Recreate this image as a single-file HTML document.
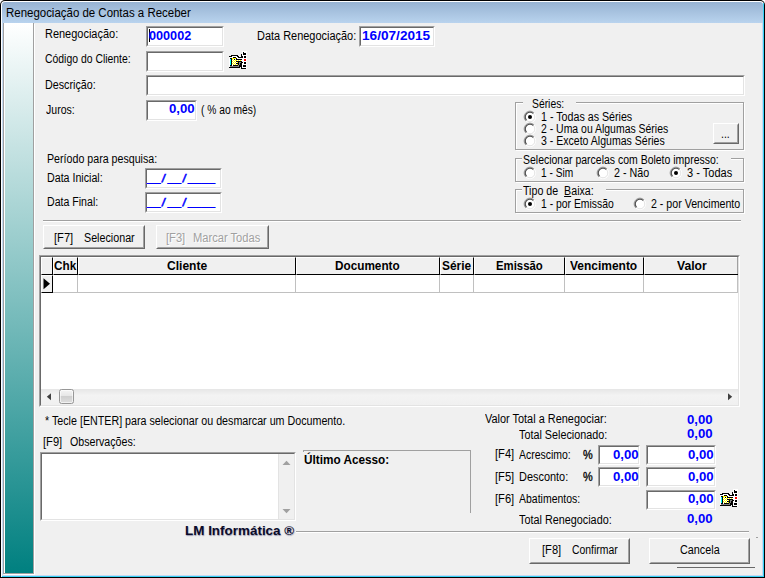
<!DOCTYPE html>
<html lang="pt-BR"><head><meta charset="utf-8"><title>Renegociação de Contas a Receber</title>
<style>
html,body{margin:0;padding:0}
body{width:765px;height:578px;position:relative;overflow:hidden;background:#f0f0f0;font-family:"Liberation Sans",sans-serif}
.a{position:absolute;box-sizing:border-box}
.t{position:absolute;white-space:pre;line-height:16px;transform-origin:0 0;font-family:"Liberation Sans",sans-serif}
/* window frame */
#frame{left:0;top:0;width:765px;height:578px;background:#000;border-radius:5px 5px 0 0}
#frame2{left:1px;top:1px;width:763px;height:576px;background:#fff;border-radius:4px 4px 0 0}
#title{left:2px;top:2px;width:761px;height:21px;background:linear-gradient(#97b3d2,#b9d3ee);border-radius:3px 3px 0 0}
#client{left:3px;top:23px;width:759px;height:552px;background:#f0f0f0}
#side{left:3px;top:23px;width:31px;height:551px;background:linear-gradient(#ffffff,#008080);border:1px solid #a0a0a0;border-top:none;box-shadow:inset 1px 0 0 #fff,1px 1px 0 #fff}
/* sunken edit */
.ed{background:#fff;border:1px solid;border-color:#a0a0a0 #fff #fff #a0a0a0}
.ed:before{content:"";position:absolute;left:0;top:0;right:0;bottom:0;border:1px solid;border-color:#696969 #e3e3e3 #e3e3e3 #696969}
/* raised button */
.bt{background:#f0f0f0;border:1px solid;border-color:#fff #696969 #696969 #fff}
.bt:before{content:"";position:absolute;left:0;top:0;right:0;bottom:0;border:1px solid;border-color:#f0f0f0 #a0a0a0 #a0a0a0 #f0f0f0}
/* etched group */
.gb{border:1px solid #a0a0a0;box-shadow:1px 1px 0 #fff, inset 1px 1px 0 #fff}
.gl{background:#f0f0f0}
.hl{height:2px;border-top:1px solid #a0a0a0;border-bottom:1px solid #fff}
svg{position:absolute;overflow:visible}
body{background:#fff}
#fr3{left:2px;top:23px;width:762px;height:554px;background:#c4daf3;border-right:1px solid #35d0f5;border-bottom:1px solid #35d0f5}
#cy{left:763px;top:3px;width:1px;height:574px;background:#35d0f5}
.sl{display:inline-block;font-size:.85em;width:.654em;text-align:center;font-style:normal;transform:skewX(-14deg)}

.pc{font-size:11px;color:#000;}
.r{font-size:12.5px;color:#000;}
.g{font-size:12.5px;color:#a0a0a0;text-shadow:1px 1px 0 #fff;}
.b{font-size:13px;color:#0000ff;font-weight:bold;}
.bk{font-size:12.5px;color:#000;font-weight:bold;}
.ti{font-size:12px;color:#000;}
.lm{font-size:13.33px;color:#0b0b2a;font-weight:bold;}
</style></head>
<body>
<div class="a" id="frame"></div>
<div class="a" id="frame2"></div>
<div class="a" id="fr3"></div>
<div class="a" id="title"></div><div class="a" id="cy"></div>
<div class="a" id="client"></div>
<div class="a" id="side"></div>
<div class="a ed" style="left:146px;top:26px;width:78px;height:21px;"></div>
<div class="a " style="left:149px;top:29px;width:1px;height:13px;background:#000"></div>
<div class="a ed" style="left:359px;top:26px;width:76px;height:21px;"></div>
<div class="a ed" style="left:146px;top:51px;width:78px;height:21px;"></div>
<div class="a ed" style="left:146px;top:75px;width:599px;height:21px;"></div>
<div class="a ed" style="left:146px;top:100px;width:51px;height:21px;"></div>
<div class="a ed" style="left:145px;top:168px;width:77px;height:21px;"></div>
<div class="a ed" style="left:145px;top:192px;width:77px;height:21px;"></div>
<div class="a gb" style="left:515px;top:102px;width:229px;height:48px;"></div>
<div class="a gl" style="left:523px;top:102px;width:53px;height:2px;"></div>
<div class="a gb" style="left:515px;top:158px;width:229px;height:24px;"></div>
<div class="a gl" style="left:522px;top:158px;width:209px;height:2px;"></div>
<div class="a gb" style="left:515px;top:189px;width:229px;height:24px;"></div>
<div class="a gl" style="left:522px;top:189px;width:84px;height:2px;"></div>
<svg style="left:523.5px;top:110.5px" width="12" height="12" viewBox="0 0 12 12"><circle cx="6" cy="6" r="5.5" fill="#fff"/><path d="M10.1 1.9A5.8 5.8 0 1 0 1.9 10.1" fill="none" stroke="#a0a0a0" stroke-width="1"/><path d="M1.9 10.1A5.8 5.8 0 0 0 10.1 1.9" fill="none" stroke="#fff" stroke-width="1"/><path d="M9.4 2.6A4.8 4.8 0 1 0 2.6 9.4" fill="none" stroke="#505050" stroke-width="1.3"/><path d="M2.6 9.4A4.8 4.8 0 0 0 9.4 2.6" fill="none" stroke="#e3e3e3" stroke-width="1"/><circle cx="6" cy="6" r="2" fill="#000"/></svg>
<svg style="left:523.5px;top:123px" width="12" height="12" viewBox="0 0 12 12"><circle cx="6" cy="6" r="5.5" fill="#fff"/><path d="M10.1 1.9A5.8 5.8 0 1 0 1.9 10.1" fill="none" stroke="#a0a0a0" stroke-width="1"/><path d="M1.9 10.1A5.8 5.8 0 0 0 10.1 1.9" fill="none" stroke="#fff" stroke-width="1"/><path d="M9.4 2.6A4.8 4.8 0 1 0 2.6 9.4" fill="none" stroke="#505050" stroke-width="1.3"/><path d="M2.6 9.4A4.8 4.8 0 0 0 9.4 2.6" fill="none" stroke="#e3e3e3" stroke-width="1"/></svg>
<svg style="left:523.5px;top:135px" width="12" height="12" viewBox="0 0 12 12"><circle cx="6" cy="6" r="5.5" fill="#fff"/><path d="M10.1 1.9A5.8 5.8 0 1 0 1.9 10.1" fill="none" stroke="#a0a0a0" stroke-width="1"/><path d="M1.9 10.1A5.8 5.8 0 0 0 10.1 1.9" fill="none" stroke="#fff" stroke-width="1"/><path d="M9.4 2.6A4.8 4.8 0 1 0 2.6 9.4" fill="none" stroke="#505050" stroke-width="1.3"/><path d="M2.6 9.4A4.8 4.8 0 0 0 9.4 2.6" fill="none" stroke="#e3e3e3" stroke-width="1"/></svg>
<svg style="left:523.5px;top:167px" width="12" height="12" viewBox="0 0 12 12"><circle cx="6" cy="6" r="5.5" fill="#fff"/><path d="M10.1 1.9A5.8 5.8 0 1 0 1.9 10.1" fill="none" stroke="#a0a0a0" stroke-width="1"/><path d="M1.9 10.1A5.8 5.8 0 0 0 10.1 1.9" fill="none" stroke="#fff" stroke-width="1"/><path d="M9.4 2.6A4.8 4.8 0 1 0 2.6 9.4" fill="none" stroke="#505050" stroke-width="1.3"/><path d="M2.6 9.4A4.8 4.8 0 0 0 9.4 2.6" fill="none" stroke="#e3e3e3" stroke-width="1"/></svg>
<svg style="left:596.5px;top:167px" width="12" height="12" viewBox="0 0 12 12"><circle cx="6" cy="6" r="5.5" fill="#fff"/><path d="M10.1 1.9A5.8 5.8 0 1 0 1.9 10.1" fill="none" stroke="#a0a0a0" stroke-width="1"/><path d="M1.9 10.1A5.8 5.8 0 0 0 10.1 1.9" fill="none" stroke="#fff" stroke-width="1"/><path d="M9.4 2.6A4.8 4.8 0 1 0 2.6 9.4" fill="none" stroke="#505050" stroke-width="1.3"/><path d="M2.6 9.4A4.8 4.8 0 0 0 9.4 2.6" fill="none" stroke="#e3e3e3" stroke-width="1"/></svg>
<svg style="left:670px;top:167px" width="12" height="12" viewBox="0 0 12 12"><circle cx="6" cy="6" r="5.5" fill="#fff"/><path d="M10.1 1.9A5.8 5.8 0 1 0 1.9 10.1" fill="none" stroke="#a0a0a0" stroke-width="1"/><path d="M1.9 10.1A5.8 5.8 0 0 0 10.1 1.9" fill="none" stroke="#fff" stroke-width="1"/><path d="M9.4 2.6A4.8 4.8 0 1 0 2.6 9.4" fill="none" stroke="#505050" stroke-width="1.3"/><path d="M2.6 9.4A4.8 4.8 0 0 0 9.4 2.6" fill="none" stroke="#e3e3e3" stroke-width="1"/><circle cx="6" cy="6" r="2" fill="#000"/></svg>
<svg style="left:523.5px;top:198px" width="12" height="12" viewBox="0 0 12 12"><circle cx="6" cy="6" r="5.5" fill="#fff"/><path d="M10.1 1.9A5.8 5.8 0 1 0 1.9 10.1" fill="none" stroke="#a0a0a0" stroke-width="1"/><path d="M1.9 10.1A5.8 5.8 0 0 0 10.1 1.9" fill="none" stroke="#fff" stroke-width="1"/><path d="M9.4 2.6A4.8 4.8 0 1 0 2.6 9.4" fill="none" stroke="#505050" stroke-width="1.3"/><path d="M2.6 9.4A4.8 4.8 0 0 0 9.4 2.6" fill="none" stroke="#e3e3e3" stroke-width="1"/><circle cx="6" cy="6" r="2" fill="#000"/></svg>
<svg style="left:634px;top:198px" width="12" height="12" viewBox="0 0 12 12"><circle cx="6" cy="6" r="5.5" fill="#fff"/><path d="M10.1 1.9A5.8 5.8 0 1 0 1.9 10.1" fill="none" stroke="#a0a0a0" stroke-width="1"/><path d="M1.9 10.1A5.8 5.8 0 0 0 10.1 1.9" fill="none" stroke="#fff" stroke-width="1"/><path d="M9.4 2.6A4.8 4.8 0 1 0 2.6 9.4" fill="none" stroke="#505050" stroke-width="1.3"/><path d="M2.6 9.4A4.8 4.8 0 0 0 9.4 2.6" fill="none" stroke="#e3e3e3" stroke-width="1"/></svg>
<div class="a bt" style="left:713px;top:123px;width:26px;height:21px;"></div>
<div class="a hl" style="left:43px;top:220px;width:698px;height:2px;"></div>
<div class="a bt" style="left:43px;top:225px;width:102px;height:24px;"></div>
<div class="a bt" style="left:156px;top:225px;width:113px;height:24px;"></div>
<div class="a " style="left:39px;top:255px;width:701px;height:152px;background:#fff;border:1px solid;border-color:#a0a0a0 #fff #fff #a0a0a0"></div>
<div class="a " style="left:40px;top:256px;width:699px;height:150px;border:1px solid;border-color:#696969 #e3e3e3 #e3e3e3 #696969"></div>
<div class="a " style="left:41px;top:257px;width:12px;height:18px;background:#f0f0f0;border-left:1px solid #fff;border-top:1px solid #fff;border-right:1px solid #000;border-bottom:1px solid #000"></div>
<div class="a " style="left:53px;top:257px;width:25px;height:18px;background:#f0f0f0;border-left:1px solid #fff;border-top:1px solid #fff;border-right:1px solid #000;border-bottom:1px solid #000"></div>
<div class="a " style="left:78px;top:257px;width:218px;height:18px;background:#f0f0f0;border-left:1px solid #fff;border-top:1px solid #fff;border-right:1px solid #000;border-bottom:1px solid #000"></div>
<div class="a " style="left:296px;top:257px;width:144px;height:18px;background:#f0f0f0;border-left:1px solid #fff;border-top:1px solid #fff;border-right:1px solid #000;border-bottom:1px solid #000"></div>
<div class="a " style="left:440px;top:257px;width:34px;height:18px;background:#f0f0f0;border-left:1px solid #fff;border-top:1px solid #fff;border-right:1px solid #000;border-bottom:1px solid #000"></div>
<div class="a " style="left:474px;top:257px;width:91px;height:18px;background:#f0f0f0;border-left:1px solid #fff;border-top:1px solid #fff;border-right:1px solid #000;border-bottom:1px solid #000"></div>
<div class="a " style="left:565px;top:257px;width:79px;height:18px;background:#f0f0f0;border-left:1px solid #fff;border-top:1px solid #fff;border-right:1px solid #000;border-bottom:1px solid #000"></div>
<div class="a " style="left:644px;top:257px;width:94px;height:18px;background:#f0f0f0;border-left:1px solid #fff;border-top:1px solid #fff;border-right:1px solid #000;border-bottom:1px solid #000"></div>
<div class="a " style="left:737px;top:257px;width:1px;height:17px;background:#a0a0a0"></div>
<div class="a " style="left:41px;top:275px;width:697px;height:18px;background:#fff;border-bottom:1px solid #c0c0c0"></div>
<div class="a " style="left:41px;top:275px;width:12px;height:18px;background:#f0f0f0;border:1px solid;border-color:#fff #000 #000 #fff"></div>
<div class="a " style="left:77px;top:275px;width:1px;height:18px;background:#c0c0c0"></div>
<div class="a " style="left:295px;top:275px;width:1px;height:18px;background:#c0c0c0"></div>
<div class="a " style="left:439px;top:275px;width:1px;height:18px;background:#c0c0c0"></div>
<div class="a " style="left:473px;top:275px;width:1px;height:18px;background:#c0c0c0"></div>
<div class="a " style="left:564px;top:275px;width:1px;height:18px;background:#c0c0c0"></div>
<div class="a " style="left:643px;top:275px;width:1px;height:18px;background:#c0c0c0"></div>
<div class="a " style="left:737px;top:275px;width:1px;height:18px;background:#c0c0c0"></div>
<svg style="left:43px;top:278px" width="8" height="12" viewBox="0 0 8 12"><path d="M0.5 0.3L7 5.8L0.5 11.3Z" fill="#000"/></svg>
<div class="a " style="left:41px;top:389px;width:697px;height:16px;background:linear-gradient(#e6e6e6,#f3f3f3 40%,#f0f0f0)"></div>
<svg style="left:46px;top:393px" width="6" height="8" viewBox="0 0 6 8"><path d="M5 0.2L0.8 3.7L5 7.2Z" fill="#404040"/></svg>
<svg style="left:727px;top:393px" width="6" height="8" viewBox="0 0 6 8"><path d="M1 0.2L5.2 3.7L1 7.2Z" fill="#404040"/></svg>
<div class="a " style="left:59px;top:389px;width:15px;height:15px;border:1px solid #979797;border-radius:2.5px;background:linear-gradient(#f4f4f4,#e6e6e6 45%,#cfcfcf 50%,#dedede 100%);box-shadow:inset 0 0 0 1px rgba(255,255,255,.6)"></div>
<div class="a ed" style="left:40px;top:452px;width:256px;height:69px;"></div>
<div class="a " style="left:278px;top:454px;width:16px;height:65px;background:#f0f0f0;border-left:1px solid #e3e3e3"></div>
<svg style="left:282px;top:460px" width="9" height="6" viewBox="0 0 9 6"><path d="M0.5 5L4.5 0.8L8.5 5Z" fill="#a0a0a0"/></svg>
<svg style="left:282px;top:508px" width="9" height="6" viewBox="0 0 9 6"><path d="M0.5 1L4.5 5.2L8.5 1Z" fill="#a0a0a0"/></svg>
<div class="a " style="left:303px;top:450px;width:168px;height:1px;background:#a0a0a0"></div>
<div class="a " style="left:303px;top:450px;width:1px;height:2px;background:#a0a0a0"></div>
<div class="a " style="left:470px;top:450px;width:1px;height:63px;background:#a0a0a0"></div>
<div class="a ed" style="left:598px;top:445px;width:42px;height:20px;"></div>
<div class="a ed" style="left:646px;top:445px;width:70px;height:20px;"></div>
<div class="a ed" style="left:598px;top:467px;width:42px;height:20px;"></div>
<div class="a ed" style="left:646px;top:467px;width:70px;height:20px;"></div>
<div class="a ed" style="left:646px;top:490px;width:70px;height:20px;"></div>
<div class="a " style="left:296px;top:531px;width:453px;height:1px;background:#a0a0a0"></div>
<div class="a " style="left:296px;top:532px;width:453px;height:1px;background:#fff"></div>
<div class="a " style="left:677px;top:567px;width:78px;height:1px;background:#696969"></div>
<div class="a " style="left:756px;top:537px;width:2px;height:1px;background:#a0a0a0"></div>
<div class="a bt" style="left:529px;top:538px;width:101px;height:26px;"></div>
<div class="a bt" style="left:649px;top:538px;width:101px;height:26px;"></div>
<svg style="left:227px;top:51px" width="20" height="18" viewBox="0 0 20 18" shape-rendering="crispEdges"><rect x="15" y="0" width="5" height="18" fill="#fff"/><rect x="2" y="5" width="13" height="11" fill="#fff"/><rect x="16" y="1" width="1" height="3" fill="#000"/><rect x="17" y="2" width="2" height="2" fill="#000"/><rect x="17" y="5" width="2" height="2" fill="#000"/><rect x="17" y="8" width="2" height="2" fill="#ff0000"/><rect x="17" y="11" width="2" height="2" fill="#000"/><rect x="16" y="14" width="3" height="2" fill="#000"/><rect x="14" y="17" width="5" height="1" fill="#000"/><rect x="4" y="4" width="7" height="1" fill="#000"/><rect x="2" y="5" width="3" height="1" fill="#000"/><rect x="10" y="5" width="2" height="1" fill="#000"/><rect x="11" y="6" width="5" height="1" fill="#000"/><rect x="14" y="3" width="1" height="3" fill="#000"/><rect x="15" y="5" width="1" height="1" fill="#000"/><rect x="6" y="6" width="3" height="1" fill="#000"/><rect x="9" y="7" width="1" height="1" fill="#000"/><rect x="3" y="7" width="2" height="1" fill="#000"/><rect x="3" y="8" width="1" height="6" fill="#00ffff"/><rect x="4" y="8" width="1" height="6" fill="#000"/><rect x="5" y="7" width="4" height="7" fill="#ffff00"/><rect x="7" y="8" width="8" height="1" fill="#000"/><rect x="9" y="9" width="6" height="1" fill="#ffff00"/><rect x="9" y="10" width="6" height="1" fill="#000"/><rect x="9" y="11" width="2" height="1" fill="#ffff00"/><rect x="11" y="11" width="1" height="1" fill="#000"/><rect x="9" y="12" width="3" height="1" fill="#000"/><rect x="9" y="13" width="2" height="1" fill="#ffff00"/><rect x="11" y="13" width="1" height="1" fill="#000"/><rect x="6" y="14" width="5" height="1" fill="#000"/><rect x="3" y="14" width="2" height="1" fill="#000"/><rect x="6" y="8" width="1" height="1" fill="#fff"/><rect x="8" y="8" width="1" height="1" fill="#fff"/><rect x="5" y="9" width="1" height="1" fill="#fff"/><rect x="7" y="9" width="1" height="1" fill="#fff"/><rect x="6" y="10" width="1" height="1" fill="#fff"/><rect x="8" y="10" width="1" height="1" fill="#fff"/><rect x="5" y="11" width="1" height="1" fill="#fff"/><rect x="7" y="11" width="1" height="1" fill="#fff"/><rect x="6" y="12" width="1" height="1" fill="#fff"/><rect x="8" y="12" width="1" height="1" fill="#fff"/><rect x="5" y="13" width="1" height="1" fill="#fff"/><rect x="7" y="13" width="1" height="1" fill="#fff"/><rect x="10" y="9" width="1" height="1" fill="#fff"/><rect x="12" y="9" width="1" height="1" fill="#fff"/><rect x="14" y="9" width="1" height="1" fill="#fff"/><rect x="9" y="11" width="1" height="1" fill="#fff"/><rect x="9" y="13" width="1" height="1" fill="#fff"/><rect x="12" y="11" width="2" height="1" fill="#808080"/><rect x="12" y="12" width="1" height="2" fill="#808080"/><rect x="11" y="14" width="1" height="1" fill="#808080"/><rect x="3" y="15" width="9" height="1" fill="#808080"/><rect x="14" y="11" width="2" height="1" fill="#000"/><rect x="13" y="12" width="2" height="2" fill="#000"/><rect x="12" y="14" width="3" height="2" fill="#000"/><rect x="2" y="16" width="11" height="1" fill="#000"/><rect x="14" y="16" width="1" height="1" fill="#000"/></svg>
<svg style="left:718px;top:489px" width="20" height="18" viewBox="0 0 20 18" shape-rendering="crispEdges"><rect x="15" y="0" width="5" height="18" fill="#fff"/><rect x="2" y="5" width="13" height="11" fill="#fff"/><rect x="16" y="1" width="1" height="3" fill="#000"/><rect x="17" y="2" width="2" height="2" fill="#000"/><rect x="17" y="5" width="2" height="2" fill="#000"/><rect x="17" y="8" width="2" height="2" fill="#ff0000"/><rect x="17" y="11" width="2" height="2" fill="#000"/><rect x="16" y="14" width="3" height="2" fill="#000"/><rect x="14" y="17" width="5" height="1" fill="#000"/><rect x="4" y="4" width="7" height="1" fill="#000"/><rect x="2" y="5" width="3" height="1" fill="#000"/><rect x="10" y="5" width="2" height="1" fill="#000"/><rect x="11" y="6" width="5" height="1" fill="#000"/><rect x="14" y="3" width="1" height="3" fill="#000"/><rect x="15" y="5" width="1" height="1" fill="#000"/><rect x="6" y="6" width="3" height="1" fill="#000"/><rect x="9" y="7" width="1" height="1" fill="#000"/><rect x="3" y="7" width="2" height="1" fill="#000"/><rect x="3" y="8" width="1" height="6" fill="#00ffff"/><rect x="4" y="8" width="1" height="6" fill="#000"/><rect x="5" y="7" width="4" height="7" fill="#ffff00"/><rect x="7" y="8" width="8" height="1" fill="#000"/><rect x="9" y="9" width="6" height="1" fill="#ffff00"/><rect x="9" y="10" width="6" height="1" fill="#000"/><rect x="9" y="11" width="2" height="1" fill="#ffff00"/><rect x="11" y="11" width="1" height="1" fill="#000"/><rect x="9" y="12" width="3" height="1" fill="#000"/><rect x="9" y="13" width="2" height="1" fill="#ffff00"/><rect x="11" y="13" width="1" height="1" fill="#000"/><rect x="6" y="14" width="5" height="1" fill="#000"/><rect x="3" y="14" width="2" height="1" fill="#000"/><rect x="6" y="8" width="1" height="1" fill="#fff"/><rect x="8" y="8" width="1" height="1" fill="#fff"/><rect x="5" y="9" width="1" height="1" fill="#fff"/><rect x="7" y="9" width="1" height="1" fill="#fff"/><rect x="6" y="10" width="1" height="1" fill="#fff"/><rect x="8" y="10" width="1" height="1" fill="#fff"/><rect x="5" y="11" width="1" height="1" fill="#fff"/><rect x="7" y="11" width="1" height="1" fill="#fff"/><rect x="6" y="12" width="1" height="1" fill="#fff"/><rect x="8" y="12" width="1" height="1" fill="#fff"/><rect x="5" y="13" width="1" height="1" fill="#fff"/><rect x="7" y="13" width="1" height="1" fill="#fff"/><rect x="10" y="9" width="1" height="1" fill="#fff"/><rect x="12" y="9" width="1" height="1" fill="#fff"/><rect x="14" y="9" width="1" height="1" fill="#fff"/><rect x="9" y="11" width="1" height="1" fill="#fff"/><rect x="9" y="13" width="1" height="1" fill="#fff"/><rect x="12" y="11" width="2" height="1" fill="#808080"/><rect x="12" y="12" width="1" height="2" fill="#808080"/><rect x="11" y="14" width="1" height="1" fill="#808080"/><rect x="3" y="15" width="9" height="1" fill="#808080"/><rect x="14" y="11" width="2" height="1" fill="#000"/><rect x="13" y="12" width="2" height="2" fill="#000"/><rect x="12" y="14" width="3" height="2" fill="#000"/><rect x="2" y="16" width="11" height="1" fill="#000"/><rect x="14" y="16" width="1" height="1" fill="#000"/></svg>
<span class="t ti" style="left:6.1px;top:4.84px;transform:scaleX(0.9547);">Renegociação de Contas a Receber</span>
<span class="t r" style="left:45.3px;top:25.67px;transform:scaleX(0.8776);">Renegociação:</span>
<span class="t r" style="left:45.3px;top:50.67px;transform:scaleX(0.8332);">Código do Cliente:</span>
<span class="t r" style="left:45.3px;top:76.67px;transform:scaleX(0.8586);">Descrição:</span>
<span class="t r" style="left:46.3px;top:101.67px;transform:scaleX(0.8430);">Juros:</span>
<span class="t r" style="left:257.3px;top:27.67px;transform:scaleX(0.8757);">Data Renegociação:</span>
<span class="t r" style="left:200.8px;top:101.67px;transform:scaleX(0.8191);">( % ao mês)</span>
<span class="t r" style="left:46.8px;top:150.67px;transform:scaleX(0.8525);">Período para pesquisa:</span>
<span class="t r" style="left:46.8px;top:169.67px;transform:scaleX(0.8528);">Data Inicial:</span>
<span class="t r" style="left:46.8px;top:193.67px;transform:scaleX(0.8469);">Data Final:</span>
<span class="t b" style="left:149.3px;top:27.50px;transform:scaleX(0.9726);">000002</span>
<span class="t b" style="left:362.3px;top:27.50px;transform:scaleX(1.0480);">16/07/2015</span>
<span class="t b" style="left:169.3px;top:100.50px;transform:scaleX(1.0153);">0,00</span>
<span class="t b" style="left:147.3px;top:169.50px;transform:scaleX(1.0000);-webkit-text-stroke:0.5px #0000ff;transform:scaleX(.941);">__<i class="sl">/</i>__<i class="sl">/</i>____</span>
<span class="t b" style="left:147.3px;top:193.50px;transform:scaleX(1.0000);-webkit-text-stroke:0.5px #0000ff;transform:scaleX(.941);">__<i class="sl">/</i>__<i class="sl">/</i>____</span>
<span class="t r" style="left:531.8px;top:95.67px;transform:scaleX(0.8276);">Séries:</span>
<span class="t r" style="left:541.3px;top:108.67px;transform:scaleX(0.8541);">1 - Todas as Séries</span>
<span class="t r" style="left:541.3px;top:120.67px;transform:scaleX(0.8360);">2 - Uma ou Algumas Séries</span>
<span class="t r" style="left:541.3px;top:132.67px;transform:scaleX(0.8437);">3 - Exceto Algumas Séries</span>
<span class="t r" style="left:720.8px;top:125.67px;transform:scaleX(0.8348);">...</span>
<span class="t r" style="left:522.8px;top:151.67px;transform:scaleX(0.8383);">Selecionar parcelas com Boleto impresso:</span>
<span class="t r" style="left:541.3px;top:164.67px;transform:scaleX(0.8133);">1 - Sim</span>
<span class="t r" style="left:614.3px;top:164.67px;transform:scaleX(0.8585);">2 - Não</span>
<span class="t r" style="left:687.3px;top:164.67px;transform:scaleX(0.8828);">3 - Todas</span>
<span class="t r" style="left:522.8px;top:182.67px;transform:scaleX(0.8526);">Tipo de  <u>B</u>aixa:</span>
<span class="t r" style="left:541.3px;top:195.67px;transform:scaleX(0.8306);">1 - por Emissão</span>
<span class="t r" style="left:651.3px;top:195.67px;transform:scaleX(0.8502);">2 - por Vencimento</span>
<span class="t r" style="left:53.8px;top:229.67px;transform:scaleX(0.8911);">[F7]</span>
<span class="t r" style="left:83.8px;top:229.67px;transform:scaleX(0.8582);">Selecionar</span>
<span class="t g" style="left:165.8px;top:229.67px;transform:scaleX(0.8911);">[F3]</span>
<span class="t g" style="left:192.8px;top:229.67px;transform:scaleX(0.8901);">Marcar Todas</span>
<span class="t bk" style="left:53.8px;top:257.67px;transform:scaleX(0.9397);">Chk</span>
<span class="t bk" style="left:166.8px;top:257.67px;transform:scaleX(0.9643);">Cliente</span>
<span class="t bk" style="left:334.8px;top:257.67px;transform:scaleX(0.9411);">Documento</span>
<span class="t bk" style="left:442.3px;top:257.67px;transform:scaleX(0.9544);">Série</span>
<span class="t bk" style="left:495.8px;top:257.67px;transform:scaleX(0.9082);">Emissão</span>
<span class="t bk" style="left:570.3px;top:257.67px;transform:scaleX(0.9576);">Vencimento</span>
<span class="t bk" style="left:676.8px;top:257.67px;transform:scaleX(0.9713);">Valor</span>
<span class="t r" style="left:44.8px;top:412.67px;transform:scaleX(0.8562);">* Tecle [ENTER] para selecionar ou desmarcar um Documento.</span>
<span class="t r" style="left:42.8px;top:433.67px;transform:scaleX(0.8911);">[F9]</span>
<span class="t r" style="left:69.8px;top:433.67px;transform:scaleX(0.8519);">Observações:</span>
<span class="t bk" style="left:303.8px;top:451.67px;transform:scaleX(0.9411);">Último Acesso:</span>
<span class="t lm" style="left:184.9px;top:522.88px;transform:scaleX(1.0082);text-shadow:0.5px 0.5px 1px rgba(20,20,80,.4);">LM Informática ®</span>
<span class="t r" style="left:485.3px;top:410.67px;transform:scaleX(0.8743);">Valor Total a Renegociar:</span>
<span class="t r" style="left:518.8px;top:426.67px;transform:scaleX(0.8634);">Total Selecionado:</span>
<span class="t r" style="left:494.8px;top:445.67px;transform:scaleX(0.8911);">[F4]</span>
<span class="t r" style="left:518.8px;top:446.67px;transform:scaleX(0.8362);">Acrescimo:</span>
<span class="t pc" style="left:583.3px;top:446.01px;transform:scale(0.9917,1.100);-webkit-text-stroke:0.3px #000;">%</span>
<span class="t r" style="left:494.8px;top:468.67px;transform:scaleX(0.8911);">[F5]</span>
<span class="t r" style="left:518.8px;top:468.67px;transform:scaleX(0.8742);">Desconto:</span>
<span class="t pc" style="left:583.3px;top:468.01px;transform:scale(0.9917,1.100);-webkit-text-stroke:0.3px #000;">%</span>
<span class="t r" style="left:494.8px;top:490.67px;transform:scaleX(0.8911);">[F6]</span>
<span class="t r" style="left:518.8px;top:490.67px;transform:scaleX(0.8387);">Abatimentos:</span>
<span class="t r" style="left:518.8px;top:511.67px;transform:scaleX(0.8661);">Total Renegociado:</span>
<span class="t b" style="left:686.8px;top:411.50px;transform:scaleX(1.0153);">0,00</span>
<span class="t b" style="left:686.8px;top:425.50px;transform:scaleX(1.0153);">0,00</span>
<span class="t b" style="left:613.3px;top:446.50px;transform:scaleX(1.0153);">0,00</span>
<span class="t b" style="left:688.3px;top:446.50px;transform:scaleX(1.0153);">0,00</span>
<span class="t b" style="left:613.3px;top:468.50px;transform:scaleX(1.0153);">0,00</span>
<span class="t b" style="left:688.3px;top:468.50px;transform:scaleX(1.0153);">0,00</span>
<span class="t b" style="left:688.3px;top:490.50px;transform:scaleX(1.0153);">0,00</span>
<span class="t b" style="left:687.3px;top:510.50px;transform:scaleX(1.0153);">0,00</span>
<span class="t r" style="left:541.8px;top:541.67px;transform:scaleX(0.8911);">[F8]</span>
<span class="t r" style="left:571.8px;top:541.67px;transform:scaleX(0.8328);">Confirmar</span>
<span class="t r" style="left:679.8px;top:541.67px;transform:scaleX(0.8654);">Cancela</span>
</body></html>
